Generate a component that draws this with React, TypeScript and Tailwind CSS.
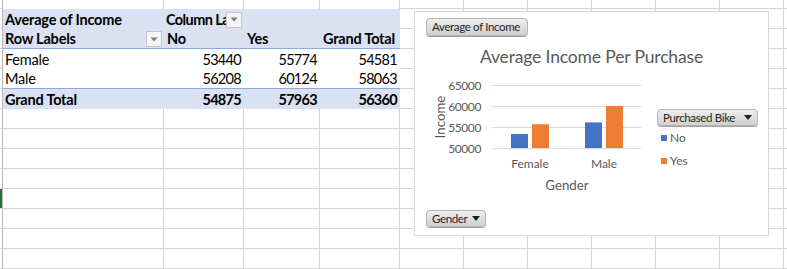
import React from "react";

const GRID = "border-[#d4d4d4]";

function Cell({ w, bottom = true }: { w: string; bottom?: boolean }) {
  return <div className={`${w} h-full shrink-0 border-r ${bottom ? "border-b" : ""} ${GRID}`} />;
}

function RightCells({ bottom = true }: { bottom?: boolean }) {
  return (
    <>
      <Cell w="w-[64px]" bottom={bottom} />
      <Cell w="w-[64px]" bottom={bottom} />
      <Cell w="w-[64px]" bottom={bottom} />
      <Cell w="w-[64px]" bottom={bottom} />
      <Cell w="w-[64px]" bottom={bottom} />
      <Cell w="w-[64px]" bottom={bottom} />
      <div className={`w-[10px] h-full shrink-0 border-b ${GRID}`} />
    </>
  );
}

function LeftStrip({ green = false }: { green?: boolean }) {
  return (
    <div
      className={`w-[3px] h-full shrink-0 border-b border-r border-b-[#d4d4d4] border-r-[#b8b8b8] ${
        green ? "bg-[#217346]" : ""
      }`}
    />
  );
}

function PivotDrop() {
  return (
    <div className="w-[16px] h-[16px] shrink-0 border border-[#c6c6c6] bg-[#f4f4f4] flex items-center justify-center">
      <svg width="8" height="5" viewBox="0 0 8 5">
        <polygon points="0.5,0.5 7.5,0.5 4,4.5" fill="#7a7a7a" />
      </svg>
    </div>
  );
}

function FieldButton({ label, w, h, arrow }: { label: string; w: string; h: string; arrow?: boolean }) {
  return (
    <div
      className={`${w} ${h} rounded-[4px] border border-[#b4b4b4] bg-linear-to-b from-[#eeeeee] to-[#d0d0d0] shadow-[0_1px_0_#a0a0a0] flex items-center pl-[5px] pr-[5px] text-[11.5px] tracking-[-0.35px] text-[#262626] leading-none`}
    >
      <span className="whitespace-nowrap">{label}</span>
      {arrow && (
        <svg className="ml-auto" width="8" height="5" viewBox="0 0 8 5">
          <polygon points="0,0 8,0 4,5" fill="#1f1f1f" />
        </svg>
      )}
    </div>
  );
}

function yOf(v: number) {
  return 75.5 - ((v - 50000) * 63) / 15000;
}

function Plot() {
  const ticks = [65000, 60000, 55000, 50000];
  const bars = [
    { x: 96, v: 53440, c: "#4472C4" },
    { x: 117, v: 55774, c: "#ED7D31" },
    { x: 170, v: 56208, c: "#4472C4" },
    { x: 191, v: 60124, c: "#ED7D31" },
  ];
  return (
    <svg width="236" height="128" viewBox="0 0 236 128" className="shrink-0" style={{ fontFamily: "Lato, sans-serif" }}>
      {ticks.map((t, i) => {
        const y = 12.5 + i * 21;
        return (
          <g key={t}>
            <line x1="77" x2="226" y1={y} y2={y} stroke="#d9d9d9" strokeWidth="1" />
            <text x="66" y={y + 4} textAnchor="end" fontSize="12" fill="#595959" letterSpacing="-0.4">
              {t}
            </text>
          </g>
        );
      })}
      {bars.map((b) => (
        <rect key={b.x} x={b.x} y={yOf(b.v)} width="17" height={75 - yOf(b.v)} fill={b.c} />
      ))}
      <text x="115" y="95" textAnchor="middle" fontSize="12" fill="#595959">
        Female
      </text>
      <text x="189" y="95" textAnchor="middle" fontSize="12" fill="#595959">
        Male
      </text>
      <text x="152" y="116.5" textAnchor="middle" fontSize="13.3" fill="#595959">
        Gender
      </text>
      <text x="0" y="0" transform="translate(30 44) rotate(-90)" textAnchor="middle" fontSize="13.3" fill="#595959">
        Income
      </text>
    </svg>
  );
}

function Chart() {
  return (
    <div className="absolute left-[414px] top-[11px] w-[355px] h-[225px] border border-[#d9d9d9] bg-white flex flex-col">
      <div className="pl-[11px] pt-[6px]">
        <FieldButton label="Average of Income" w="w-[102px]" h="h-[18px]" />
      </div>
      <div className="mt-[8px] h-[26px] leading-[26px] text-center text-[17.5px] tracking-[-0.15px] text-[#595959]">
        Average Income Per Purchase
      </div>
      <div className="mt-[3px] flex">
        <Plot />
        <div className="ml-[6px] mt-[36px] flex flex-col">
          <FieldButton label="Purchased Bike" w="w-[101px]" h="h-[17px]" arrow />
          <div className="mt-[5px] h-[14px] flex items-center pl-[4px] gap-[3px] text-[12px] text-[#595959]">
            <div className="w-[6px] h-[6px] bg-[#4472C4]" />
            <span>No</span>
          </div>
          <div className="mt-[9px] h-[14px] flex items-center pl-[4px] gap-[3px] text-[12px] text-[#595959]">
            <div className="w-[6px] h-[6px] bg-[#ED7D31]" />
            <span>Yes</span>
          </div>
        </div>
      </div>
      <div className="pl-[11px] mt-[9px]">
        <FieldButton label="Gender" w="w-[60px]" h="h-[17px]" arrow />
      </div>
    </div>
  );
}

type PivotRowProps = {
  cells: React.ReactNode[];
  blue?: boolean;
  bold?: boolean;
  line?: boolean;
  align?: ("l" | "r")[];
};

const PIVOT_W = ["w-[161px]", "w-[80px]", "w-[76px]", "w-[80px]"];

function PivotRow({ cells, blue, bold, line, align = ["l", "r", "r", "r"] }: PivotRowProps) {
  return (
    <div className="flex h-[20px]">
      <LeftStrip />
      <div
        className={`flex h-full shrink-0 ${blue ? "bg-[#d9e1f2]" : "bg-white"} ${
          line ? "border-b border-[#8ea9db]" : ""
        } ${bold ? "font-bold" : ""} text-[14.5px] text-black tracking-[-0.2px]`}
      >
        {cells.map((c, i) => (
          <div
            key={i}
            className={`${PIVOT_W[i]} h-full shrink-0 flex items-center pt-[1px] px-[2px] ${
              align[i] === "r" ? "justify-end pr-[3px] tracking-[-0.7px]" : "justify-start"
            } whitespace-nowrap overflow-hidden`}
          >
            {c}
          </div>
        ))}
      </div>
      <RightCells />
    </div>
  );
}

export default function App() {
  const plainRows = Array.from({ length: 8 });
  return (
    <div
      className="relative w-[787px] h-[269px] overflow-hidden bg-white"
      style={{ fontFamily: "Lato, 'Liberation Sans', sans-serif" }}
    >
      <div className="flex flex-col">
        <div className="flex h-[9px]">
          <LeftStrip />
          <div className={`w-[161px] h-full shrink-0 border-r ${GRID}`} />
          <div className={`w-[80px] h-full shrink-0 border-r ${GRID}`} />
          <div className={`w-[76px] h-full shrink-0 border-r ${GRID}`} />
          <div className={`w-[80px] h-full shrink-0 border-r ${GRID}`} />
          <RightCells />
        </div>
        <PivotRow
          blue
          bold
          align={["l", "l", "l", "l"]}
          cells={[
            "Average of Income",
            <div className="flex items-center w-full h-full">
              <span className="flex-1 overflow-hidden whitespace-nowrap tracking-[-0.6px]">Column Labels</span>
              <PivotDrop />
            </div>,
            "",
            "",
          ]}
        />
        <PivotRow
          blue
          bold
          line
          align={["l", "l", "l", "l"]}
          cells={[
            <div className="flex items-center w-full h-full">
              <span className="flex-1">Row Labels</span>
              <PivotDrop />
            </div>,
            <span className="pl-[1px]">No</span>,
            <span className="pl-[1px]">Yes</span>,
            <span className="pl-[1px]">Grand Total</span>,
          ]}
        />
        <PivotRow cells={["Female", "53440", "55774", "54581"]} />
        <PivotRow line cells={["Male", "56208", "60124", "58063"]} />
        <PivotRow blue bold cells={["Grand Total", "54875", "57963", "56360"]} />
        {plainRows.map((_, i) => (
          <div key={i} className="flex h-[20px]">
            <LeftStrip green={i === 4} />
            <Cell w="w-[161px]" />
            <Cell w="w-[80px]" />
            <Cell w="w-[76px]" />
            <Cell w="w-[80px]" />
            <RightCells />
          </div>
        ))}
      </div>
      <Chart />
    </div>
  );
}
